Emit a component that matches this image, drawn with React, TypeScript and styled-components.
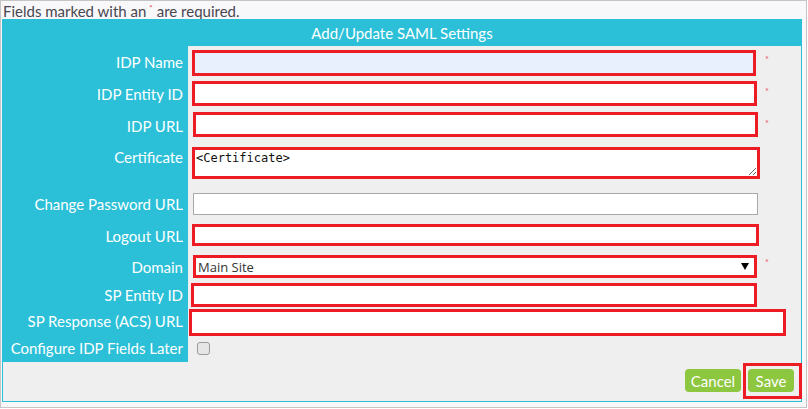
import React from "react";
import styled, { createGlobalStyle } from "styled-components";

const CYAN = "#2bc0d8";
const RED = "#ed1c24";
const GREEN = "#8dc63f";

const Global = createGlobalStyle`
  html, body { margin: 0; padding: 0; background: #ffffff; }
  body { font-family: Lato, "Open Sans", Arial, sans-serif; }
  * { box-sizing: border-box; }
`;

const Frame = styled.div`
  width: 807px;
  height: 408px;
  border: 1px solid #c5c5c5;
  background: #f8f8fa;
  padding: 0 4px 0 1px;
  display: flex;
  flex-direction: column;
`;

const Note = styled.div`
  height: 18px;
  line-height: 15px;
  font-size: 15px;
  color: #4a4650;
  padding-left: 1px;
  white-space: nowrap;
`;

const NoteStar = styled.span`
  color: #e8474f;
  font-size: 8px;
  vertical-align: 6px;
  margin: 0 4px 0 3px;
`;

const Panel = styled.div`
  width: 800px;
  height: 383px;
  border: 1px solid ${CYAN};
  background: #efefef;
  display: flex;
  flex-direction: column;
`;

const Header = styled.div`
  height: 26px;
  line-height: 26px;
  background: ${CYAN};
  color: #ffffff;
  text-align: center;
  font-size: 15px;
`;

const Body = styled.div`
  display: flex;
  flex-direction: column;
`;

const Row = styled.div<{ $h: number }>`
  display: grid;
  grid-template-columns: 185px 576px 1fr;
  height: ${(p) => p.$h}px;
`;

const Label = styled.label<{ $top?: number }>`
  background: ${CYAN};
  color: #ffffff;
  font-size: 15px;
  display: flex;
  justify-content: flex-end;
  align-items: ${(p) => (p.$top !== undefined ? "flex-start" : "center")};
  padding-top: ${(p) => p.$top ?? 0}px;
  padding-right: 5px;
  white-space: nowrap;
`;

const Cell = styled.div<{ $top: number; $left: number }>`
  padding-top: ${(p) => p.$top}px;
  padding-left: ${(p) => p.$left}px;
  display: flex;
  align-items: flex-start;
`;

const Req = styled.span<{ $top: number }>`
  color: #ee5560;
  font-size: 9px;
  line-height: 9px;
  padding-top: ${(p) => p.$top}px;
  padding-left: 1px;
`;

const Input = styled.input<{ $w: number; $h: number; $hl?: boolean; $bg?: string }>`
  flex: none;
  width: ${(p) => p.$w}px;
  height: ${(p) => p.$h}px;
  border: ${(p) => (p.$hl ? `3px solid ${RED}` : "1px solid #a9a9a9")};
  background: ${(p) => p.$bg ?? "#ffffff"};
  margin: 0;
  padding: 0 4px;
  font-family: "Open Sans", Arial, sans-serif;
  font-size: 13px;
  outline: none;
`;

const TextArea = styled.textarea<{ $w: number; $h: number }>`
  flex: none;
  width: ${(p) => p.$w}px;
  height: ${(p) => p.$h}px;
  border: 3px solid ${RED};
  background: #ffffff;
  margin: 0;
  padding: 1px 1px;
  font-family: "DejaVu Sans Mono", "Liberation Mono", monospace;
  font-size: 12px;
  line-height: 14px;
  color: #111111;
  outline: none;
`;

const SelectBox = styled.div<{ $w: number; $h: number }>`
  flex: none;
  width: ${(p) => p.$w}px;
  height: ${(p) => p.$h}px;
  border: 3px solid ${RED};
  background: #ffffff;
  display: flex;
  align-items: center;
  padding-right: 5px;
`;

const Select = styled.select`
  flex: 1;
  height: 100%;
  border: none;
  background: transparent;
  appearance: none;
  -webkit-appearance: none;
  font-family: "Open Sans", Arial, sans-serif;
  font-size: 13px;
  color: #333333;
  padding: 0 0 0 2px;
  margin: 0;
  outline: none;
`;

const Check = styled.input`
  appearance: none;
  -webkit-appearance: none;
  width: 13px;
  height: 13px;
  margin: 0;
  border: 1px solid #9a9a9a;
  border-radius: 3px;
  background: #e6e6e6;
`;

const Footer = styled.div`
  display: flex;
  justify-content: flex-end;
  gap: 7px;
  padding: 7px 7px 0 0;
`;

const Button = styled.button<{ $w: number; $mark?: boolean }>`
  position: relative;
  width: ${(p) => p.$w}px;
  height: 23px;
  border: none;
  border-radius: 4px;
  background: ${GREEN};
  color: #ffffff;
  font-family: Lato, "Open Sans", Arial, sans-serif;
  font-size: 15px;
  padding: 0;
  cursor: pointer;
  &::after {
    content: "";
    display: ${(p) => (p.$mark ? "block" : "none")};
    position: absolute;
    top: -6px;
    bottom: -7px;
    left: -5px;
    right: -8px;
    border: 3px solid ${RED};
  }
`;

type F = {
  label: string;
  h: number;
  top: number;
  left: number;
  w: number;
  fh: number;
  req: number;
  bg?: string;
};

const textRows: F[] = [
  { label: "IDP Name", h: 32, top: 4, left: 4, w: 564, fh: 26, req: 9, bg: "#e8f0fe" },
  { label: "IDP Entity ID", h: 32, top: 3, left: 4, w: 565, fh: 25, req: 9 },
  { label: "IDP URL", h: 32, top: 2, left: 5, w: 565, fh: 25, req: 9 },
];

export default function App() {
  return (
    <>
      <Global />
      <Frame>
        <Note>
          Fields marked with an<NoteStar>*</NoteStar>are required.
        </Note>
        <Panel>
          <Header>Add/Update SAML Settings</Header>
          <Body>
            {textRows.map((r) => (
              <Row key={r.label} $h={r.h}>
                <Label>{r.label}</Label>
                <Cell $top={r.top} $left={r.left}>
                  <Input $w={r.w} $h={r.fh} $hl $bg={r.bg} defaultValue="" />
                </Cell>
                <Req $top={r.req}>*</Req>
              </Row>
            ))}
            <Row $h={45}>
              <Label $top={6}>Certificate</Label>
              <Cell $top={5} $left={4}>
                <TextArea $w={568} $h={32} defaultValue="<Certificate>" />
              </Cell>
              <div />
            </Row>
            <Row $h={34}>
              <Label>Change Password URL</Label>
              <Cell $top={6} $left={5}>
                <Input $w={565} $h={22} />
              </Cell>
              <div />
            </Row>
            <Row $h={30}>
              <Label>Logout URL</Label>
              <Cell $top={3} $left={4}>
                <Input $w={567} $h={22} $hl />
              </Cell>
              <div />
            </Row>
            <Row $h={31}>
              <Label>Domain</Label>
              <Cell $top={4} $left={5}>
                <SelectBox $w={564} $h={23}>
                  <Select defaultValue="main">
                    <option value="main">Main Site</option>
                  </Select>
                  <svg width="8" height="7" viewBox="0 0 8 7">
                    <path d="M0 0 H8 L4 7 Z" fill="#000" />
                  </svg>
                </SelectBox>
              </Cell>
              <Req $top={7}>*</Req>
            </Row>
            <Row $h={24}>
              <Label>SP Entity ID</Label>
              <Cell $top={1} $left={3}>
                <Input $w={566} $h={24} $hl />
              </Cell>
              <div />
            </Row>
            <Row $h={28}>
              <Label>SP Response (ACS) URL</Label>
              <Cell $top={3} $left={1}>
                <Input $w={597} $h={27} $hl />
              </Cell>
              <div />
            </Row>
            <Row $h={28}>
              <Label>Configure IDP Fields Later</Label>
              <Cell $top={8} $left={9}>
                <Check type="checkbox" />
              </Cell>
              <div />
            </Row>
          </Body>
          <Footer>
            <Button $w={56}>Cancel</Button>
            <Button $w={46} $mark>
              Save
            </Button>
          </Footer>
        </Panel>
      </Frame>
    </>
  );
}
